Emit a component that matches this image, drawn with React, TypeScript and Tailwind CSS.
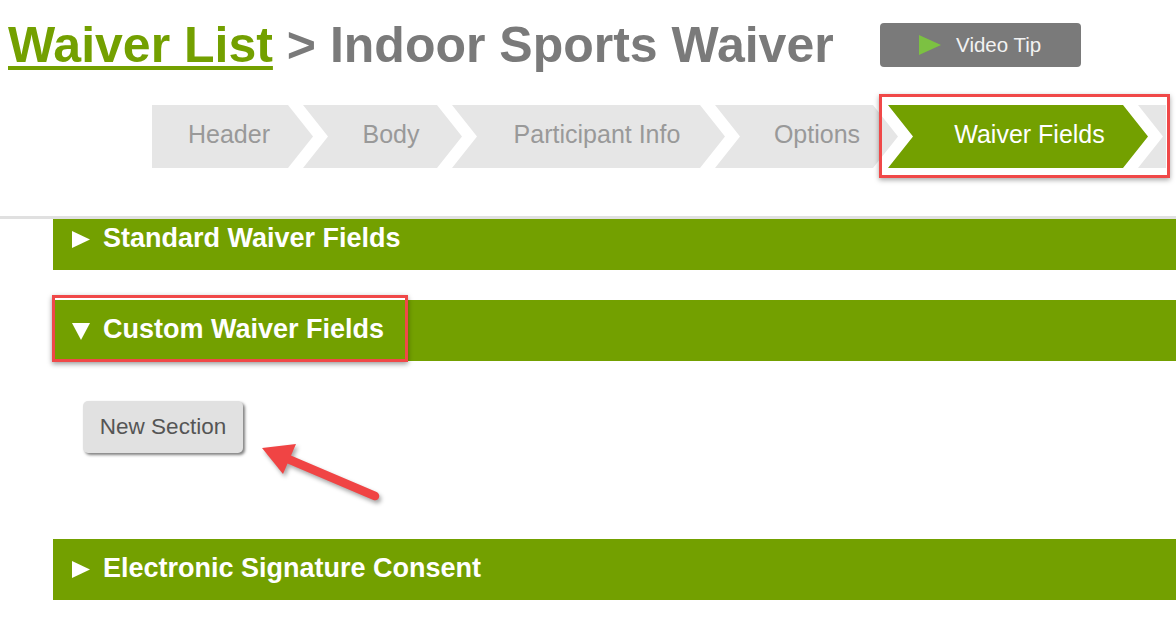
import React from "react";

const FONT = { fontFamily: '"Liberation Sans", Arial, sans-serif' };

function SectionBar({
  title,
  open,
  className = "",
}: {
  title: string;
  open?: boolean;
  className?: string;
}) {
  return (
    <div
      className={`ml-[53px] h-[61px] bg-[#73a000] flex items-center pl-[19px] pb-[3px] ${className}`}
    >
      {open ? (
        <svg width="18" height="18" viewBox="0 0 18 18" className="mt-[3px]">
          <polygon points="0,1 18,1 9,18" fill="#fff" />
        </svg>
      ) : (
        <svg width="18" height="17" viewBox="0 0 18 17" className="mt-[3px]">
          <polygon points="0,0 18,8.5 0,17" fill="#fff" />
        </svg>
      )}
      <span className="ml-[13px] text-white font-bold text-[27px] leading-none whitespace-nowrap">
        {title}
      </span>
    </div>
  );
}

export default function App() {
  return (
    <div className="relative w-[1176px] h-[630px] bg-white overflow-hidden" style={FONT}>
      {/* Title row */}
      <div className="flex items-center h-[90px] pl-[8px]">
        <h1 className="text-[50px] leading-[50px] font-bold text-[#7a7a7a] whitespace-nowrap">
          <a className="text-[#73a000] underline decoration-[4px] underline-offset-[4px]">
            Waiver List
          </a>{" "}
          &gt; Indoor Sports Waiver
        </h1>
        <button className="ml-[46px] w-[201px] h-[44px] bg-[#7a7a7a] rounded-[4px] flex items-center justify-center gap-[15px]">
          <svg width="22" height="20" viewBox="0 0 22 20">
            <polygon points="0,0 22,10 0,20" fill="#7cc142" />
          </svg>
          <span className="text-[20.5px] text-[#f2f2f2] leading-none">Video Tip</span>
        </button>
      </div>

      {/* Steps */}
      <div className="relative mt-[15px] h-[63px] pl-[152px] flex">
        <div className="w-[161px] h-[63px] shrink-0 bg-[#e6e6e6] flex items-center justify-center pr-[7px] pb-[3px] text-[25px] text-[#999] [clip-path:polygon(0_0,136px_0,161px_50%,136px_100%,0_100%)]">
          Header
        </div>
        <div className="-ml-[10px] w-[159px] h-[63px] shrink-0 bg-[#e6e6e6] flex items-center justify-center pl-[25px] pr-[8px] pb-[3px] text-[25px] text-[#999] [clip-path:polygon(0_0,134px_0,159px_50%,134px_100%,0_100%,25px_50%)]">
          Body
        </div>
        <div className="-ml-[10px] w-[273px] h-[63px] shrink-0 bg-[#e6e6e6] flex items-center justify-center pl-[25px] pr-[8px] pb-[3px] text-[25px] text-[#999] whitespace-nowrap [clip-path:polygon(0_0,248px_0,273px_50%,248px_100%,0_100%,25px_50%)]">
          Participant Info
        </div>
        <div className="-ml-[10px] w-[183px] h-[63px] shrink-0 bg-[#e6e6e6] flex items-center justify-center pl-[25px] pr-[4px] pb-[3px] text-[25px] text-[#999] [clip-path:polygon(0_0,158px_0,183px_50%,158px_100%,0_100%,25px_50%)]">
          Options
        </div>
        <div className="-ml-[10px] w-[260px] h-[63px] shrink-0 bg-[#73a000] flex items-center justify-center pl-[25px] pr-[2px] pb-[3px] text-[25px] text-white whitespace-nowrap [clip-path:polygon(0_0,235px_0,260px_50%,235px_100%,0_100%,25px_50%)]">
          Waiver Fields
        </div>
        <div className="-ml-[10px] w-[28px] h-[63px] shrink-0 bg-[#e6e6e6] [clip-path:polygon(0_0,28px_0,28px_100%,0_100%,25px_50%)]" />
        {/* highlight box */}
        <div className="absolute left-[879px] -top-[11px] w-[291px] h-[84px] border-[3px] border-[#f04848] shadow-[0_2px_5px_rgba(0,0,0,0.35)]" />
      </div>

      {/* divider */}
      <div className="mt-[48px] h-[3px] bg-[#e0e0e0]" />

      {/* Content */}
      <div className="overflow-hidden pt-[1px]">
        <SectionBar title="Standard Waiver Fields" className="-mt-[11px]" />

        <div className="relative mt-[30px]">
          <SectionBar title="Custom Waiver Fields" open />
          <div className="absolute left-[52px] -top-[5px] w-[356px] h-[67px] border-[3px] border-[#f04848] shadow-[0_2px_5px_rgba(0,0,0,0.4)]" />
        </div>

        <div className="mt-[40px] ml-[83px]">
          <button className="w-[160px] h-[52px] bg-[#e1e1e1] rounded-[5px] shadow-[2px_2px_3px_rgba(0,0,0,0.5)] text-[22.5px] text-[#555] flex items-center justify-center">
            New Section
          </button>
        </div>

        <SectionBar title="Electronic Signature Consent" className="mt-[86px]" />
      </div>

      {/* red annotation arrow */}
      <svg
        className="absolute left-[250px] top-[430px] drop-shadow-[2px_3px_2px_rgba(0,0,0,0.35)]"
        width="140"
        height="80"
        viewBox="0 0 140 80"
      >
        <line
          x1="38"
          y1="29"
          x2="125"
          y2="66"
          stroke="#f04444"
          strokeWidth="8.5"
          strokeLinecap="round"
        />
        <polygon points="12,18 46,14 33,44" fill="#f04444" />
      </svg>
    </div>
  );
}
